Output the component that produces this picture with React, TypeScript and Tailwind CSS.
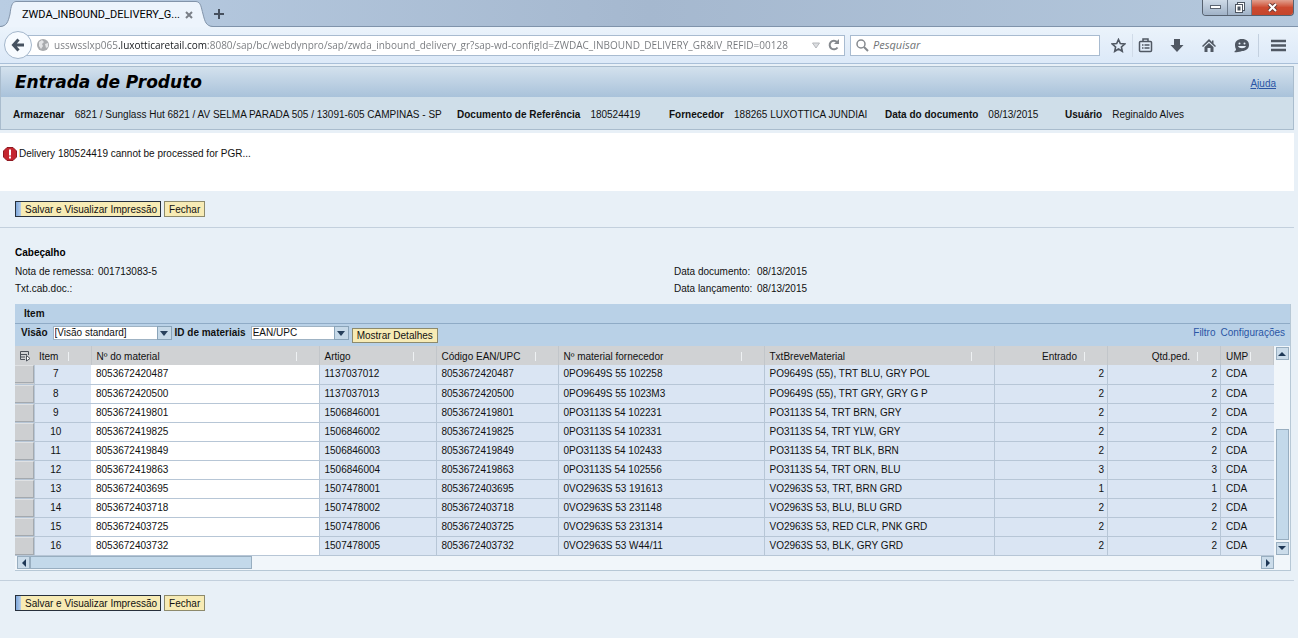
import { useState } from "react";
import type { ReactNode } from "react";

type TItem = {
  item: number;
  ean: string;
  artigo: string;
  fornecedor: string;
  texto: string;
  qtd: number;
};

const items: TItem[] = [
  { item: 7, ean: "8053672420487", artigo: "1137037012", fornecedor: "0PO9649S 55 102258", texto: "PO9649S (55), TRT BLU, GRY POL", qtd: 2 },
  { item: 8, ean: "8053672420500", artigo: "1137037013", fornecedor: "0PO9649S 55 1023M3", texto: "PO9649S (55), TRT GRY, GRY G P", qtd: 2 },
  { item: 9, ean: "8053672419801", artigo: "1506846001", fornecedor: "0PO3113S 54 102231", texto: "PO3113S 54, TRT BRN, GRY", qtd: 2 },
  { item: 10, ean: "8053672419825", artigo: "1506846002", fornecedor: "0PO3113S 54 102331", texto: "PO3113S 54, TRT YLW, GRY", qtd: 2 },
  { item: 11, ean: "8053672419849", artigo: "1506846003", fornecedor: "0PO3113S 54 102433", texto: "PO3113S 54, TRT BLK, BRN", qtd: 2 },
  { item: 12, ean: "8053672419863", artigo: "1506846004", fornecedor: "0PO3113S 54 102556", texto: "PO3113S 54, TRT ORN, BLU", qtd: 3 },
  { item: 13, ean: "8053672403695", artigo: "1507478001", fornecedor: "0VO2963S 53 191613", texto: "VO2963S 53, TRT, BRN GRD", qtd: 1 },
  { item: 14, ean: "8053672403718", artigo: "1507478002", fornecedor: "0VO2963S 53 231148", texto: "VO2963S 53, BLU, BLU GRD", qtd: 2 },
  { item: 15, ean: "8053672403725", artigo: "1507478006", fornecedor: "0VO2963S 53 231314", texto: "VO2963S 53, RED CLR, PNK GRD", qtd: 2 },
  { item: 16, ean: "8053672403732", artigo: "1507478005", fornecedor: "0VO2963S 53 W44/11", texto: "VO2963S 53, BLK, GRY GRD", qtd: 2 },
];

const TabBar = () => {
  return (
    <div className="flex h-[27px] items-end justify-between border-b border-[#7f93ab] bg-linear-to-r from-[#b9cde3] via-[#a5b8cf] to-[#b4c8dd]">
      <div className="-mb-px flex h-[26px] items-stretch">
        <svg width="16" height="26" viewBox="0 0 16 26" fill="none">
          <path d="M0 26C7 25 8 21 10 13C11 5 12 1 16 .5V26Z" fill="#edf4fc" />
          <path d="M0 25.5C7 25 8 21 10 13C11 5 12 1 16 .5" stroke="#8294aa" />
        </svg>
        <div className="flex w-[180px] items-center justify-between border-t border-[#8294aa] bg-[#edf4fc] pl-[6px] font-[Roboto,'Open_Sans',sans-serif] text-[11px] text-black">
          <span>ZWDA_INBOUND_DELIVERY_G...</span>
          <button aria-label="Fechar aba" className="mr-[3px]">
            <svg width="8" height="8" viewBox="0 0 8 8" stroke="#7a7f87" strokeWidth="2">
              <path d="M1 1L7 7M7 1L1 7" />
            </svg>
          </button>
        </div>
        <svg width="17" height="26" viewBox="0 0 17 26" fill="none">
          <path d="M0 .5C5 1 5 6 7 13C9 21 10 25 17 26H0Z" fill="#edf4fc" />
          <path d="M0 .5C5 1 5 6 7 13C9 21 10 25 17 25.5" stroke="#8294aa" />
        </svg>
        <button aria-label="Nova aba" className="pl-px">
          <svg width="10" height="10" viewBox="0 0 10 10" stroke="#46505e" strokeWidth="2">
            <path d="M5 0V10M0 5H10" />
          </svg>
        </button>
      </div>

      <div className="mr-1 flex h-4 self-start overflow-hidden rounded-b border border-t-0 border-[#56616f]">
        <button aria-label="Minimizar" className="flex w-[25px] items-center justify-center border-r border-[#6f7d8e] bg-linear-to-b from-[#cfdbe8] to-[#a0b2c7]">
          <svg width="11" height="5" viewBox="0 0 11 5">
            <rect x=".5" y=".5" width="10" height="3" fill="#fff" stroke="#5b6470" />
          </svg>
        </button>
        <button aria-label="Restaurar" className="flex w-6 items-center justify-center border-r border-[#6f7d8e] bg-linear-to-b from-[#cfdbe8] to-[#a0b2c7]">
          <svg width="12" height="12" viewBox="0 0 12 12" fill="#fff" stroke="#4d5662">
            <rect x="3.5" y=".5" width="7" height="8" />
            <rect x="1.5" y="2.5" width="7" height="8" />
            <rect x="4" y="5" width="2" height="3" fill="#4d5662" />
          </svg>
        </button>
        <button aria-label="Fechar" className="flex w-[41px] items-center justify-center bg-linear-to-b from-[#e0a08f] via-[#cc4a30] to-[#c5452b]">
          <svg width="11" height="9" viewBox="0 0 11 9" fill="none">
            <path d="M2 1L9 8M9 1L2 8" stroke="#6b3a34" strokeWidth="4" />
            <path d="M2 1L9 8M9 1L2 8" stroke="#fff" strokeWidth="2" />
          </svg>
        </button>
      </div>
    </div>
  );
};

const NavBar = () => {
  const [url, setUrl] = useState(
    "usswsslxp065.luxotticaretail.com:8080/sap/bc/webdynpro/sap/zwda_inbound_delivery_gr?sap-wd-configId=ZWDAC_INBOUND_DELIVERY_GR&IV_REFID=00128",
  );

  return (
    <div className="flex h-[37px] items-center border-b border-[#a9bfd8] bg-linear-to-b from-[#ebf3fb] to-[#dce9f8] pl-1">
      <button aria-label="Voltar" className="z-10 flex size-7 shrink-0 items-center justify-center rounded-full border border-[#a3b6cb] bg-[#f7fbff]">
        <svg width="14" height="14" viewBox="0 0 14 14" fill="none" stroke="#465260" strokeWidth="3">
          <path d="M7.500 1.500L2.500 7L7.500 12.500M3 7H13" />
        </svg>
      </button>
      <div className="-ml-2 flex h-[21px] min-w-0 flex-1 items-center border border-[#a8bbd0] bg-white pr-1 pl-3">
        <svg className="shrink-0" width="12" height="12" viewBox="0 0 12 12">
          <circle cx="6" cy="6" r="6" fill="#a9abae" />
          <path d="M2 3L5 1L7 3L5 5L6 7L4 10L2 7ZM8 5L11 4V8L9 9Z" fill="#e3e4e6" />
        </svg>
        <input
          aria-label="Endereço"
          value={url}
          onChange={(e) => setUrl(e.target.value)}
          className="ml-[5px] min-w-0 flex-1 bg-[linear-gradient(90deg,#75787c_64px,#15181c_64px,#15181c_154px,#75787c_154px)] bg-clip-text font-['Open_Sans',sans-serif] text-[10px] text-transparent caret-black outline-none"
        />
        <svg className="mx-2 shrink-0" width="8" height="7" viewBox="0 0 8 7" fill="#dcdee1" stroke="#b4b7bb">
          <path d="M.5 1H7.500L4 6Z" />
        </svg>
        <button aria-label="Recarregar" className="shrink-0">
          <svg width="12" height="12" viewBox="0 0 12 12" fill="none" stroke="#85898e" strokeWidth="2">
            <path d="M9.500 8.500A4.300 4.300 0 1 1 9 3" />
            <path d="M11 0V5H6Z" fill="#85898e" stroke="none" />
          </svg>
        </button>
      </div>
      <div className="ml-[5px] flex h-[21px] w-[250px] shrink-0 items-center gap-1 border border-[#a8bbd0] bg-white pl-[5px]">
        <svg width="13" height="13" viewBox="0 0 13 13" fill="none" stroke="#85898e" strokeWidth="2">
          <circle cx="5" cy="5" r="4" strokeWidth="1.500" />
          <path d="M8 8L12 12" />
        </svg>
        <input
          aria-label="Pesquisar"
          placeholder="Pesquisar"
          className="min-w-0 flex-1 font-['Open_Sans',sans-serif] text-[11px] italic outline-none placeholder:text-[#707376]"
        />
      </div>
      <div className="ml-[11px] flex h-7 shrink-0 items-center text-[#505863]">
        <button aria-label="Favoritos" className="pr-1">
          <svg width="15" height="15" viewBox="0 0 15 15" fill="none" stroke="currentColor" strokeWidth="1.600">
            <path d="M7.500 1.500L9.300 5.600L13.700 6L10.400 9L11.300 13.300L7.500 11L3.700 13.300L4.600 9L1.300 6L5.700 5.600Z" />
          </svg>
        </button>
        <button aria-label="Lista de favoritos" className="ml-0.5 border-l border-[#d0dbe8] py-1 pl-[5px]">
          <svg width="15" height="15" viewBox="0 0 15 15" fill="none" stroke="currentColor" strokeWidth="1.500">
            <rect x="1.500" y="3.500" width="12" height="10" rx="1" />
            <path d="M5 3.500V1H10V3.500M4 7H5.500M6.500 7H11.500M4 10H5.500M6.500 10H11.500" />
          </svg>
        </button>
        <button aria-label="Downloads" className="ml-4">
          <svg width="16" height="15" viewBox="0 0 16 15" fill="currentColor">
            <path d="M5 1H11V7H14.500L8 14L1.500 7H5Z" />
          </svg>
        </button>
        <button aria-label="Página inicial" className="ml-4">
          <svg width="16" height="15" viewBox="0 0 16 15" fill="currentColor">
            <path d="M8 1L1 8L2 9L8 3.500L14 9L15 8L12.500 5.500V2.500H11V4ZM3.500 9L8 5L12.500 9V14H9.500V10H6.500V14H3.500Z" />
          </svg>
        </button>
        <button aria-label="Hello" className="ml-4">
          <svg width="17" height="15" viewBox="0 0 17 15">
            <path d="M9 1C13.500 1 16 3.500 16 7C16 10.500 13 13 9 13C7 14 4 14.500 1 14C2.500 13 3 12 3 11C2.300 10 2 8.500 2 7C2 3.500 4.500 1 9 1Z" fill="currentColor" />
            <circle cx="6.500" cy="5.500" r="1" fill="#e8f1fb" />
            <circle cx="11.500" cy="5.500" r="1" fill="#e8f1fb" />
            <path d="M5 8H13C12 11 6 11 5 8Z" fill="#e8f1fb" />
          </svg>
        </button>
        <button aria-label="Menu" className="mr-3 ml-2 border-l border-[#c3d0df] py-1 pl-3">
          <svg width="15" height="15" viewBox="0 0 15 15" stroke="currentColor" strokeWidth="2.500">
            <path d="M0 3H15M0 7.500H15M0 12H15" />
          </svg>
        </button>
      </div>
    </div>
  );
};

const Info = ({ label, value }: { label: string; value: string }) => {
  return (
    <div className="flex gap-[10px] whitespace-nowrap">
      <dt className="font-bold">{label}</dt>
      <dd>{value}</dd>
    </div>
  );
};

const Field = ({ label, value }: { label: string; value?: string }) => {
  return (
    <div className="flex">
      <dt className="w-[83px]">{label}</dt>
      <dd>{value}</dd>
    </div>
  );
};

const Actions = () => {
  return (
    <div className="flex gap-[3px] pl-[15px]">
      <button className="flex h-4 items-stretch border border-[#27303c] bg-[#f7ebb5]">
        <span className="w-[5px] bg-linear-to-r from-[#7da7dc] to-[#b9cfe8]" />
        <span className="pr-[3px] pl-1 leading-[15px]">Salvar e Visualizar Impressão</span>
      </button>
      <button className="h-4 border border-[#8d8a6c] bg-[#f7ebb5] px-1 leading-[15px]">Fechar</button>
    </div>
  );
};

const Combo = ({ id, label, value, width }: { id: string; label: string; value: string; width: string }) => {
  return (
    <>
      <label htmlFor={id} className="font-bold">
        {label}
      </label>
      <div className={`relative mr-[3px] ml-[5px] h-[14px] ${width}`}>
        <select id={id} className="block h-full w-full appearance-none border border-[#9fb3c4] bg-white pl-px leading-3 outline-none">
          <option>{value}</option>
        </select>
        <span className="pointer-events-none absolute inset-y-0 right-0 flex w-[15px] items-center justify-center border border-[#8aa4b9] bg-[#c6d9e8]">
          <svg width="8" height="5" viewBox="0 0 8 5" fill="#27405c">
            <path d="M0 0H8L4 5Z" />
          </svg>
        </span>
      </div>
    </>
  );
};

const HeadCell = ({ children, right }: { children: ReactNode; right?: boolean }) => {
  return (
    <th scope="col" className="border-r border-[#c2c6ca] p-0 pt-0.5 font-normal">
      <div className={`flex items-center ${right ? "justify-end gap-[7px]" : "justify-between pl-[5px]"}`}>
        <span className="whitespace-nowrap">{children}</span>
        <span className="mr-[22px] h-[9px] w-px bg-[#eef1f3]" />
      </div>
    </th>
  );
};

const ScrollButton = ({ label, path }: { label: string; path: string }) => {
  return (
    <button aria-label={label} className="flex size-[13px] shrink-0 items-center justify-center border border-[#98aec0] bg-[#cbdcea]">
      <svg width="8" height="8" viewBox="0 0 8 8" fill="#1f3856">
        <path d={path} />
      </svg>
    </button>
  );
};

const ItemTable = () => {
  return (
    <table className="w-full table-fixed border-collapse text-left">
      <colgroup>
        <col className="w-[19px]" />
        <col className="w-[57px]" />
        <col className="w-[228px]" />
        <col className="w-[117px]" />
        <col className="w-[122px]" />
        <col className="w-[206px]" />
        <col />
        <col className="w-[113px]" />
        <col className="w-[113px]" />
        <col className="w-[53px]" />
      </colgroup>
      <thead>
        <tr className="h-[19px] bg-[#d0d2d4]">
          <th scope="col" className="p-0">
            <button aria-label="Menu de seleção" className="flex w-full justify-center">
              <svg width="12" height="12" viewBox="0 0 12 12" fill="none" stroke="#4a5058">
                <path d="M1.500 1.500H9.500V5M1.500 1.500V9.500H6M1.500 4.500H8M1.500 7H6" />
                <path d="M7.500 5.500V11L11 8.500Z" fill="#fff" />
              </svg>
            </button>
          </th>
          <HeadCell>Item</HeadCell>
          <HeadCell>Nº do material</HeadCell>
          <HeadCell>Artigo</HeadCell>
          <HeadCell>Código EAN/UPC</HeadCell>
          <HeadCell>Nº material fornecedor</HeadCell>
          <HeadCell>TxtBreveMaterial</HeadCell>
          <HeadCell right>Entrado</HeadCell>
          <HeadCell right>Qtd.ped.</HeadCell>
          <HeadCell>UMP</HeadCell>
        </tr>
      </thead>
      <tbody>
        {items.map((row) => (
          <tr key={row.item} className="h-[19px] bg-[#dae5f3] [&>td]:border-b [&>td]:border-[#b7c6d6] [&>td]:py-0">
            <td className="border-r bg-[#cdcfd1] p-0">
              <button aria-label={`Selecionar item ${row.item}`} className="block h-[18px] w-full border-t border-r border-b border-t-[#dfe1e3] border-r-[#a4a9ae] border-b-[#a4a9ae]" />
            </td>
            <td className="pr-[19px] pl-[5px] text-center">{row.item}</td>
            <td className="border-r bg-white px-[5px]">{row.ean}</td>
            <td className="border-r px-[5px]">{row.artigo}</td>
            <td className="border-r px-[5px]">{row.ean}</td>
            <td className="border-r px-[5px]">{row.fornecedor}</td>
            <td className="border-r px-[5px]">{row.texto}</td>
            <td className="border-r pr-[3px] text-right">{row.qtd}</td>
            <td className="border-r pr-[3px] text-right">{row.qtd}</td>
            <td className="px-[5px]">CDA</td>
          </tr>
        ))}
      </tbody>
    </table>
  );
};

const App = () => {
  return (
    <div className="min-h-screen bg-[#e8f0f7] font-['Liberation_Sans',Arial,sans-serif] text-[10px] leading-3 text-[#111]">
      <TabBar />
      <NavBar />

      <main className="mr-1 pt-0.5">
        <header className="border border-[#a9bccd] bg-[#cfdee9]">
          <div className="flex h-[30px] items-center justify-between bg-linear-to-b from-[#d3e1ed] to-[#a9c2da] pr-[17px] pl-[14px]">
            <h1 className="font-['DejaVu_Sans',Verdana,sans-serif] text-[17px] font-bold text-black italic">Entrada de Produto</h1>
            <a href="#ajuda" className="pt-1 text-[#2a55a5] underline">
              Ajuda
            </a>
          </div>
          <dl className="grid h-8 grid-cols-[444px_212px_216px_180px_auto] items-center pt-1 pl-3">
            <Info label="Armazenar" value="6821 / Sunglass Hut 6821 / AV SELMA PARADA 505 / 13091-605 CAMPINAS - SP" />
            <Info label="Documento de Referência" value="180524419" />
            <Info label="Fornecedor" value="188265 LUXOTTICA JUNDIAI" />
            <Info label="Data do documento" value="08/13/2015" />
            <Info label="Usuário" value="Reginaldo Alves" />
          </dl>
        </header>

        <div role="alert" className="mt-[3px] flex h-[58px] items-start gap-0.5 bg-white pt-[14px] pl-[3px]">
          <svg width="14" height="14" viewBox="0 0 14 14">
            <path d="M4 .5H10L13.500 4V10L10 13.500H4L.5 10V4Z" fill="#c4262e" stroke="#8f1a22" />
            <path d="M6 2.500H8V8.500H6ZM6 9.500H8V11.500H6Z" fill="#fff" />
          </svg>
          <p className="pt-px">Delivery 180524419 cannot be processed for PGR...</p>
        </div>

        <div className="border-b border-[#c3d0dd] pt-[10px] pb-[10px]">
          <Actions />
        </div>

        <section className="px-[15px] pt-[19px]">
          <h2 className="font-bold text-black">Cabeçalho</h2>
          <dl className="grid grid-cols-[659px_1fr] gap-y-[5px] pt-[7px] pb-[9px]">
            <Field label="Nota de remessa:" value="001713083-5" />
            <Field label="Data documento:" value="08/13/2015" />
            <Field label="Txt.cab.doc.:" />
            <Field label="Data lançamento:" value="08/13/2015" />
          </dl>
        </section>

        <section className="mr-[3px] ml-[15px] border-r border-b border-[#b7c8d6] bg-[#f1f6fa]">
          <h2 className="h-5 border-b border-[#8fabc6] bg-[#b9d1e7] pl-[9px] leading-5 font-bold">Item</h2>
          <div className="flex h-[22px] items-center bg-[#b9d1e7] pr-[5px] pb-1 pl-[6px]">
            <Combo id="visao" label="Visão" value="[Visão standard]" width="w-[119px]" />
            <Combo id="materiais" label="ID de materiais" value="EAN/UPC" width="w-[98px]" />
            <button className="mt-1 h-[15px] border border-[#8d8a6c] bg-[#f7ebb5] px-1 leading-[13px]">Mostrar Detalhes</button>
            <div className="ml-auto flex gap-[5px] text-[#2a55a5]">
              <a href="#filtro">Filtro</a>
              <a href="#configuracoes">Configurações</a>
            </div>
          </div>
          <div className="flex">
            <div className="min-w-0 flex-1">
              <ItemTable />
              <div className="flex h-[14px] items-center pl-0.5">
                <ScrollButton label="Rolar para a esquerda" path="M6 0V8L2 4Z" />
                <div className="h-[13px] w-[222px] border border-[#98aec0] bg-[#c3d9ea]" />
                <div className="flex-1" />
                <ScrollButton label="Rolar para a direita" path="M2 0V8L6 4Z" />
              </div>
            </div>
            <div className="flex w-4 flex-col items-center pt-px pb-[15px]">
              <ScrollButton label="Rolar para cima" path="M0 6H8L4 2Z" />
              <div className="flex-1" />
              <div className="mb-0.5 h-[111px] w-[13px] border border-[#98aec0] bg-[#c3d9ea]" />
              <ScrollButton label="Rolar para baixo" path="M0 2H8L4 6Z" />
            </div>
          </div>
        </section>

        <div className="mt-[9px] border-t border-[#c3d0dd] pt-[14px]">
          <Actions />
        </div>
      </main>
    </div>
  );
};

export default App;
